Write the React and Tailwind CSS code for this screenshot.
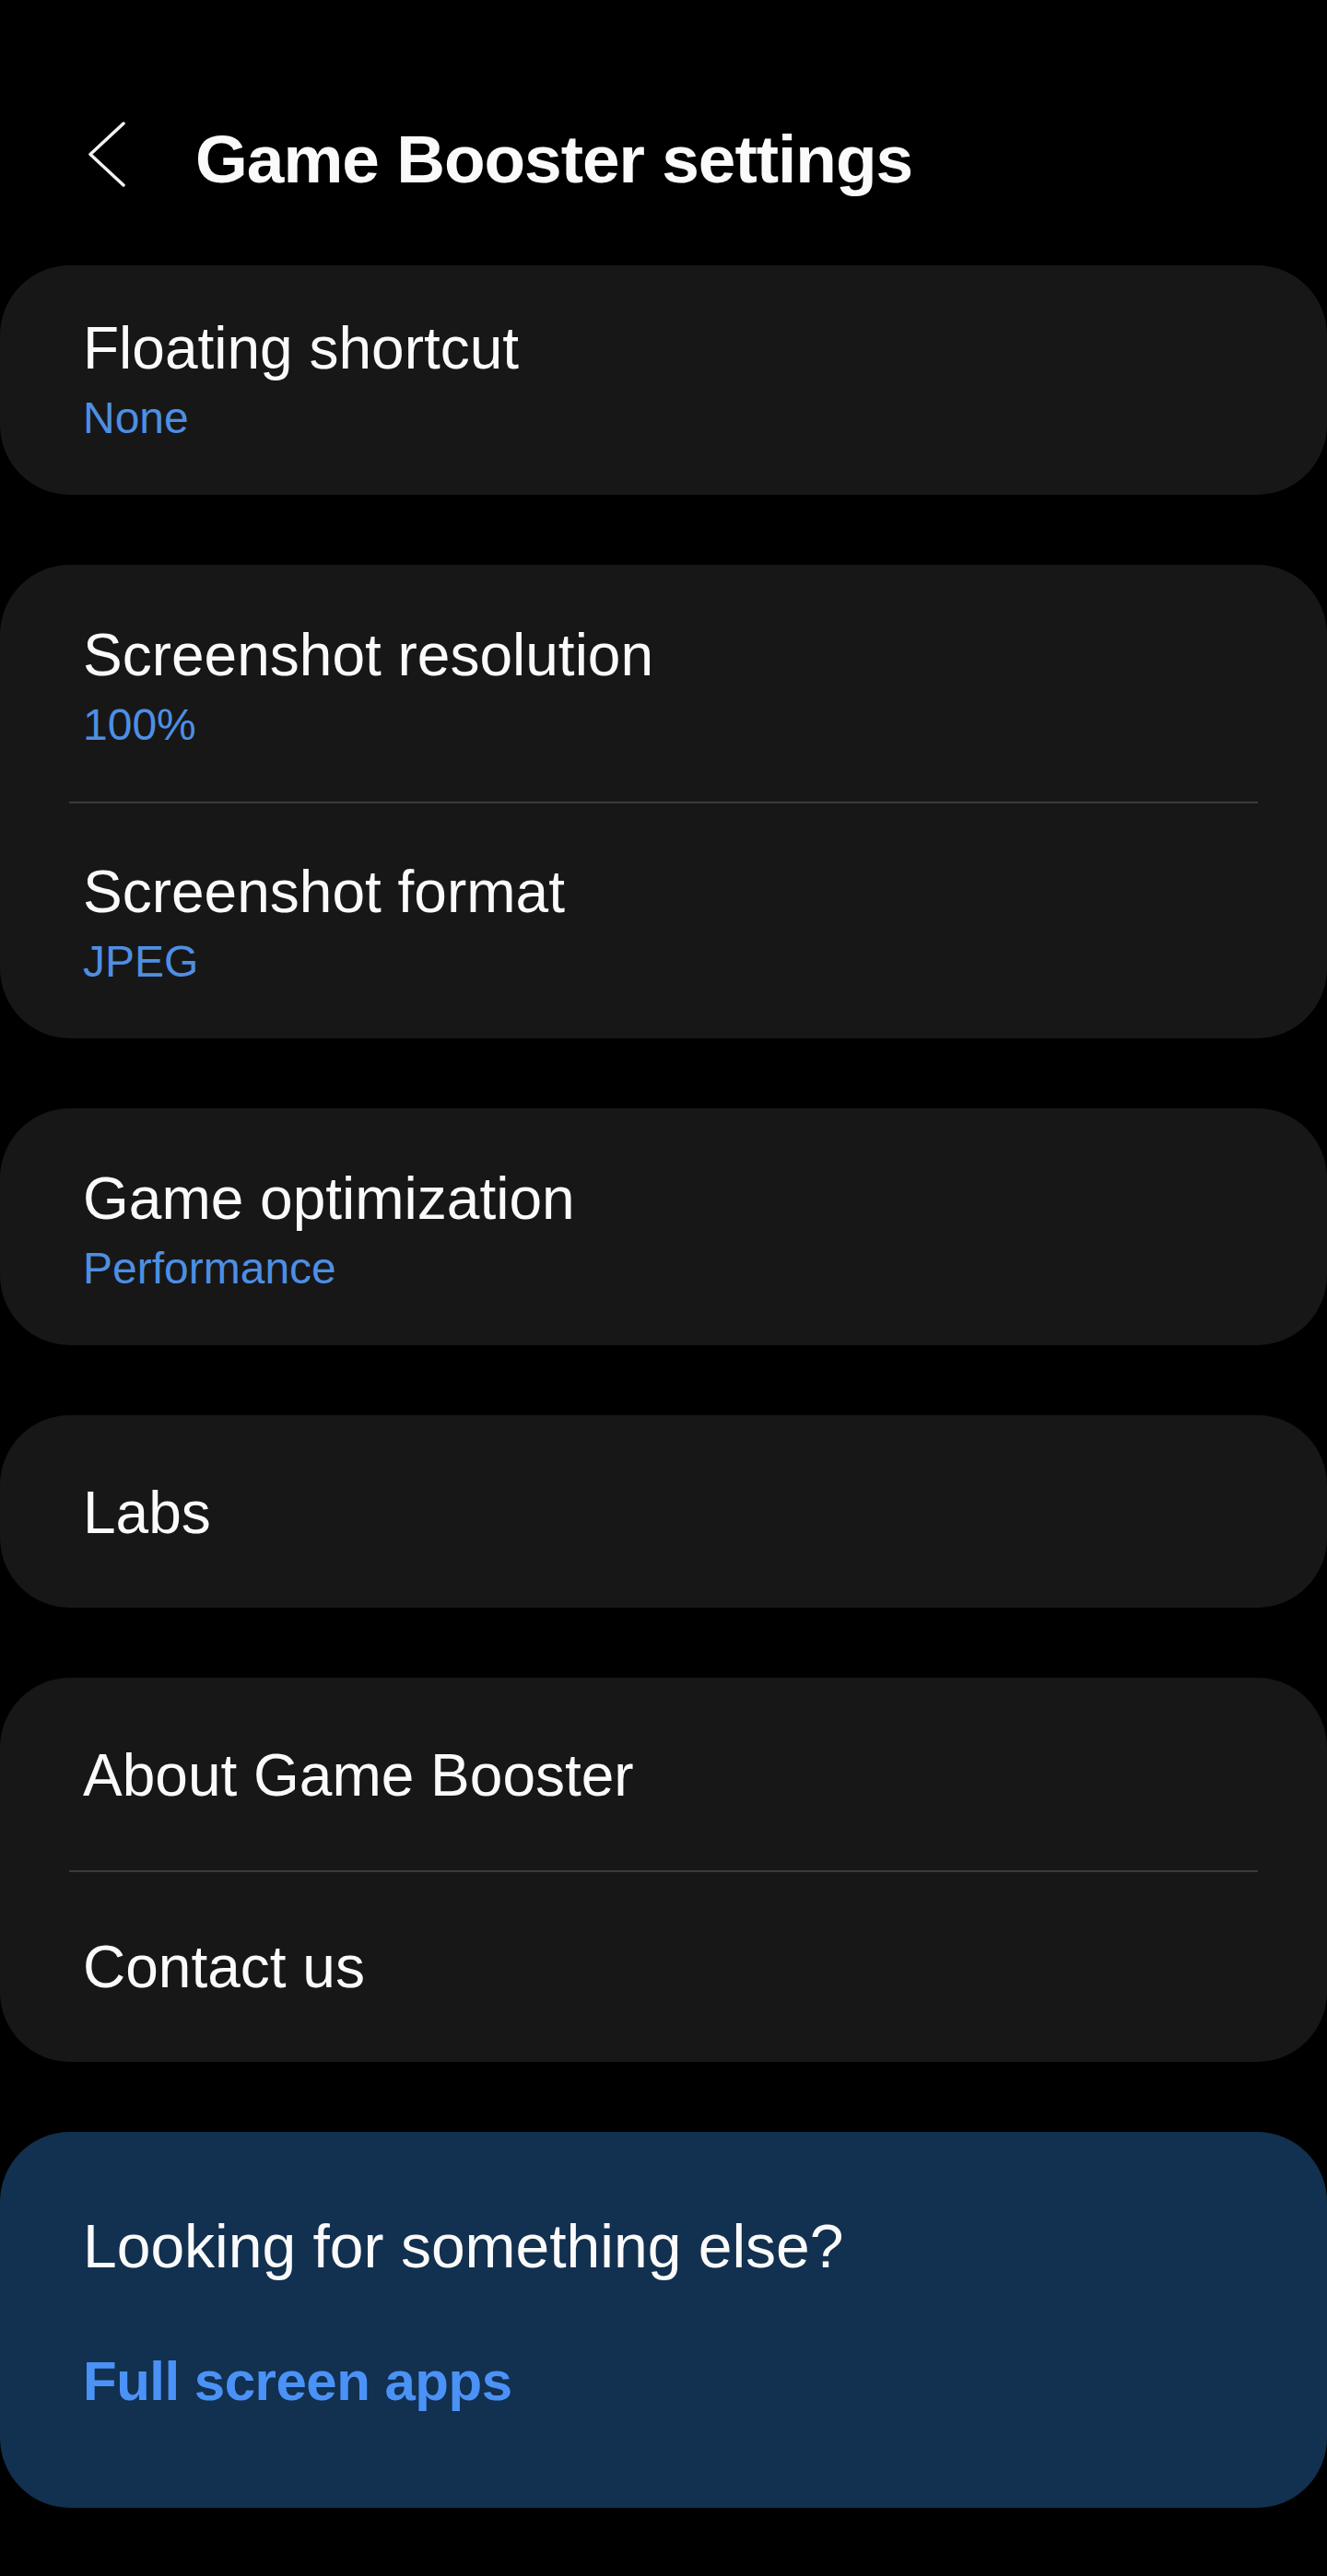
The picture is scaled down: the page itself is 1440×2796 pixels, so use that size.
const FONT = "font-['Liberation_Sans',Arial,sans-serif]";

const groups = [
  { pt: 'pt-[52px]', rows: [{ title: 'Floating shortcut', value: 'None' }] },
  {
    pt: 'pt-[60px]',
    rows: [
      { title: 'Screenshot resolution', value: '100%' },
      { title: 'Screenshot format', value: 'JPEG' },
    ],
  },
  { pt: 'pt-[60px]', rows: [{ title: 'Game optimization', value: 'Performance' }] },
  { rows: [{ title: 'Labs' }] },
  { rows: [{ title: 'About Game Booster' }, { title: 'Contact us' }] },
];

function Row({ row, first, pt }) {
  if (!row.value) {
    return (
      <div className={`pl-[90px] pr-[60px] ${first ? 'pt-[68px]' : 'pt-[65px]'} pb-[65px]`}>
        <div className="text-[64px] leading-[76px] text-[#fafafa]">{row.title}</div>
      </div>
    );
  }
  return (
    <div className={`pl-[90px] pr-[60px] ${first ? pt : 'pt-[58px]'} pb-[55px]`}>
      <div className="text-[64px] leading-[76px] text-[#fafafa]">{row.title}</div>
      <div className="mt-[10px] text-[48px] leading-[56px] text-[#4d8fe3]">{row.value}</div>
    </div>
  );
}

function Group({ group }) {
  return (
    <div className="bg-[#171717] rounded-[76px]">
      {group.rows.map((row, i) => (
        <div key={row.title}>
          {i > 0 && <div className="mx-[75px] h-[2px] bg-[#3a3a3a]" />}
          <Row row={row} first={i === 0} pt={group.pt} />
        </div>
      ))}
    </div>
  );
}

export default function App() {
  return (
    <div className={`min-h-[2796px] w-[1440px] bg-black ${FONT} pb-[75px]`}>
      {/* Header */}
      <div className="flex items-start pt-[129px] pl-[96px]">
        <svg width="40" height="71" viewBox="0 0 40 71" className="mt-[3px] shrink-0">
          <polyline
            points="38,2 2,35.5 38,69"
            fill="none"
            stroke="#f2f2f2"
            strokeWidth="3.5"
            strokeLinecap="round"
            strokeLinejoin="round"
          />
        </svg>
        <h1 className="ml-[76px] text-[73px] leading-[88px] font-bold tracking-[-1px] text-[#fafafa]">
          Game Booster settings
        </h1>
      </div>

      <div className="mt-[71px] flex flex-col gap-[76px]">
        {groups.map((g, i) => (
          <Group key={i} group={g} />
        ))}

        {/* Suggestion */}
        <div className="bg-[#12304f] rounded-[76px] pl-[90px] pr-[60px] pt-[86px] pb-[101px]">
          <div className="text-[66px] leading-[76px] text-[#fafafa]">Looking for something else?</div>
          <div className="mt-[73px] text-[60px] leading-[72px] font-bold tracking-[-0.5px] text-[#4b92f7]">
            Full screen apps
          </div>
        </div>
      </div>
    </div>
  );
}
